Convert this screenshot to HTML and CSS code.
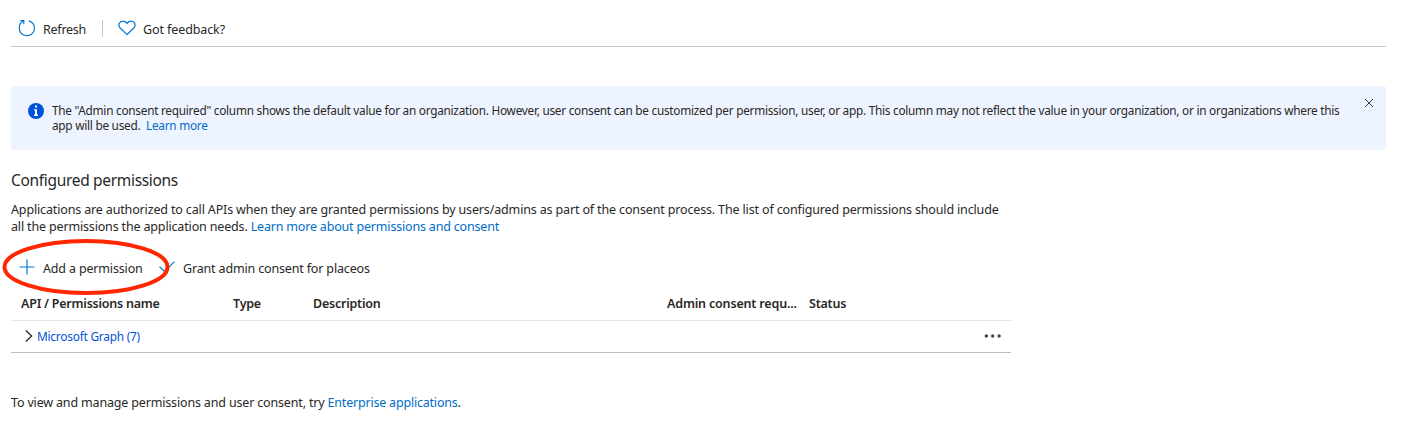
FILE: index.html
```html
<!DOCTYPE html>
<html lang="en">
<head>
<meta charset="utf-8">
<title>API permissions</title>
<link rel="stylesheet" href="styles.css">
</head>
<body>
<main class="page">
  <nav class="toolbar">
    <button class="command refresh">
      <svg class="icon" width="18" height="18" viewBox="0 0 18 18"><path d="M5.600 1.800C-.5 5 .2 13.500 5.800 16C10.800 18.200 16.500 14.500 16.500 9.300C16.500 5.500 14 2.700 10.800 1.800M2.300 1.500H5.800V5.200"/></svg>
      <span class="label">Refresh</span>
    </button>
    <span class="separator"></span>
    <button class="command feedback">
      <svg class="icon" width="18" height="16" viewBox="0 0 18 16"><path d="M9 14.600L2.200 8C-.5 5.100 1.400 1.200 4.900 1.200C7 1.200 8.200 2.300 9 3.400C9.800 2.300 11 1.200 13.100 1.200C16.600 1.200 18.500 5.100 15.800 8Z"/></svg>
      <span class="label">Got feedback?</span>
    </button>
  </nav>

  <section class="notice">
    <svg class="info" width="16" height="16" viewBox="0 0 16 16"><circle cx="8" cy="8" r="8"/><path d="M7 2.500H9V4.500H7ZM6 6.300H9V11.500H10V13H6V11.500H7V7.500H6Z"/></svg>
    <p class="notice-text"><span class="notice-first">The "Admin consent required" column shows the default value for an organization. However, user consent can be customized per permission, user, or app. This column may not reflect the value in your organization, or in organizations where this</span><br><span class="notice-second">app will be used.&nbsp; <a class="link">Learn more</a></span></p>
    <svg class="close" width="10" height="10" viewBox="0 0 10 10"><path d="M1 1L9 9M9 1L1 9"/></svg>
  </section>

  <h2 class="heading">Configured permissions</h2>
  <p class="intro"><span class="intro-first">Applications are authorized to call APIs when they are granted permissions by users/admins as part of the consent process. The list of configured permissions should include</span><br><span class="intro-second">all the permissions the application needs. <a class="link">Learn more about permissions and consent</a></span></p>

  <div class="actions">
    <button class="command add">
      <svg class="icon" width="16" height="16" viewBox="0 0 16 16"><path d="M8 .5V15.500M.5 8H15.500"/></svg>
      <span class="label">Add a permission</span>
    </button>
    <button class="command grant">
      <svg class="icon check" width="16" height="12" viewBox="0 0 16 12"><path d="M.5 5.700L5.500 10.500L15.500 .6"/></svg>
      <span class="label">Grant admin consent for placeos</span>
    </button>
    <svg class="highlight" width="168" height="58" viewBox="0 0 168 58"><ellipse cx="84" cy="29" rx="81.500" ry="26"/></svg>
  </div>

  <div class="table">
    <div class="row head">
      <span class="h-name">API / Permissions name</span><span class="h-type">Type</span><span class="h-desc">Description</span><span class="h-admin">Admin consent requ...</span><span class="h-status">Status</span>
    </div>
    <div class="row group">
      <svg class="chevron" width="8" height="12" viewBox="0 0 8 12"><path d="M.8 .5L6.700 6L.8 11.500"/></svg>
      <a class="group-name">Microsoft Graph (7)</a>
      <svg class="more" width="18" height="4" viewBox="0 0 18 4"><circle cx="2.300" cy="2" r="1.700"/><circle cx="8.700" cy="2" r="1.700"/><circle cx="15.100" cy="2" r="1.700"/></svg>
    </div>
  </div>

  <p class="footer"><span class="footer-text">To view and manage permissions and user consent, try <a class="link">Enterprise applications</a>.</span></p>
</main>
</body>
</html>
```
FILE: styles.css
```css
* { box-sizing: border-box; }
body {
  margin: 0;
  background: #fff;
  color: #292827;
  font: 12.5px/17px "Noto Sans", "Open Sans", sans-serif;
  letter-spacing: -.16px;
}
p, h2 { margin: 0; font-weight: 400; white-space: nowrap; }
svg { display: block; flex: none; fill: none; }
.page { width: 1401px; height: 422px; padding: 0 15px 0 11px; overflow: hidden; }
.link { color: #006cc8; }
.toolbar { display: flex; align-items: center; height: 47px; padding: 11px 0 0 7px; border-bottom: 1px solid #c8c8c8; }
.command { display: flex; align-items: center; padding: 0; border: 0; background: none; color: inherit; font: inherit; letter-spacing: inherit; white-space: nowrap; }
.icon { stroke: #0078d4; stroke-width: 1.2; }
.refresh { width: 84px; gap: 7px; letter-spacing: -.25px; }
.refresh .icon, .feedback .icon { margin-top: -1px; }
.toolbar .label { padding-top: 1px; }
.separator { width: 1px; height: 17px; background: #c8c6c4; }
.feedback { margin-left: 15px; gap: 7px; letter-spacing: -.1px; }
.notice { display: flex; height: 64px; margin-top: 39px; padding: 17px 12px 0 17px; border-radius: 2px; background: #eef4ff; }
.info { fill: #0052d9; }
.info path { fill: #fff; }
.notice-text { margin: 0 auto 0 8px; font-size: 11.8px; line-height: 15px; letter-spacing: -.253px; }
.close { margin-top: -5px; stroke: #3b3a39; stroke-width: 1; }
.heading { margin-top: 19px; font-size: 15.5px; line-height: 22px; letter-spacing: -.32px; }
.intro { margin-top: 10px; letter-spacing: -.148px; }
.intro-second { letter-spacing: -.16px; }
.intro-second .link { letter-spacing: -.185px; }
.actions { position: relative; display: flex; height: 22px; margin-top: 22px; padding-left: 8px; }
.add { width: 140px; gap: 8px; }
.grant { gap: 8px; }
.add .icon { margin-top: -2px; }
.check { margin-top: -2px; }
.highlight { position: absolute; left: -9px; top: -19px; }
.highlight ellipse { stroke: #ff2600; stroke-width: 4; }
.table { width: 1000px; margin-top: 8px; }
.row { display: flex; align-items: center; }
.head { height: 34px; padding-left: 10px; border-bottom: 1px solid #e4e4e4; font-weight: 600; letter-spacing: -.23px; white-space: nowrap; }
.h-name { width: 212px; }
.h-type { width: 80px; }
.h-desc { width: 354px; }
.h-admin { width: 142px; letter-spacing: -.17px; }
.group { height: 32px; padding: 0 9px 0 14px; border-bottom: 1px solid #bdbdbd; }
.chevron { margin-top: -1px; stroke: #292827; stroke-width: 1.3; }
.group-name { margin-left: 4px; color: #0052d9; font-size: 11.9px; letter-spacing: -.24px; }
.more { margin: -2px 0 0 auto; fill: #444; }
.footer { margin-top: 41px; letter-spacing: -.165px; }
.footer .link { letter-spacing: -.2px; }
```
